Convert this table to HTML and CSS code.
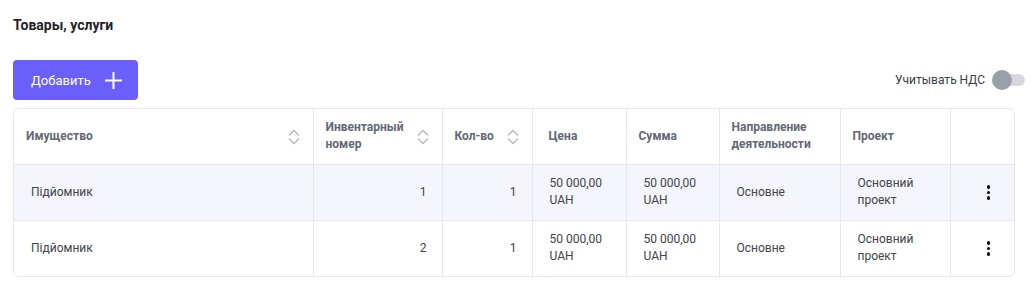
FILE: index.html
```html
<!DOCTYPE html>
<html lang="ru">
<head>
<meta charset="utf-8">
<title>Товары, услуги</title>
<link rel="stylesheet" href="styles.css">
</head>
<body>
<div class="page">
  <h2 class="title">Товары, услуги</h2>
  <div class="toolbar">
    <button class="btn-add">Добавить
      <svg class="plus" width="17" height="17" viewBox="0 0 17 17"><path d="M8.5 0V17M0 8.5H17" stroke="#fff" stroke-width="2"/></svg>
    </button>
    <div class="vat">
      <span class="vat-label">Учитывать НДС</span>
      <span class="switch"><span class="track"></span><span class="knob"></span></span>
    </div>
  </div>
  <div class="table-wrap">
    <table class="grid">
      <colgroup>
        <col style="width:299px"><col style="width:129px"><col style="width:90px"><col style="width:94px"><col style="width:93px"><col style="width:121px"><col style="width:110px"><col>
      </colgroup>
      <thead>
        <tr>
          <th><div class="th-sort"><span>Имущество</span><svg class="sort" width="14" height="18" viewBox="0 0 14 18"><path d="M2 7.5L7 2.5L12 7.5M2 10.5L7 15.5L12 10.5" fill="none" stroke="#b4b7bf" stroke-width="1.3"/></svg></div></th>
          <th><div class="th-sort"><span>Инвентарный номер</span><svg class="sort" width="14" height="18" viewBox="0 0 14 18"><path d="M2 7.5L7 2.5L12 7.5M2 10.5L7 15.5L12 10.5" fill="none" stroke="#b4b7bf" stroke-width="1.3"/></svg></div></th>
          <th><div class="th-sort"><span>Кол-во</span><svg class="sort" width="14" height="18" viewBox="0 0 14 18"><path d="M2 7.5L7 2.5L12 7.5M2 10.5L7 15.5L12 10.5" fill="none" stroke="#b4b7bf" stroke-width="1.3"/></svg></div></th>
          <th class="th-price">Цена</th>
          <th>Сумма</th>
          <th>Направление деятельности</th>
          <th>Проект</th>
          <th></th>
        </tr>
      </thead>
      <tbody>
        <tr class="alt">
          <td>Підйомник</td>
          <td class="num">1</td>
          <td class="num">1</td>
          <td>50 000,00<br>UAH</td>
          <td>50 000,00<br>UAH</td>
          <td>Основне</td>
          <td>Основний<br>проект</td>
          <td class="menu"><span class="dots"><i></i><i></i><i></i></span></td>
        </tr>
        <tr>
          <td>Підйомник</td>
          <td class="num">2</td>
          <td class="num">1</td>
          <td>50 000,00<br>UAH</td>
          <td>50 000,00<br>UAH</td>
          <td>Основне</td>
          <td>Основний<br>проект</td>
          <td class="menu"><span class="dots"><i></i><i></i><i></i></span></td>
        </tr>
      </tbody>
    </table>
  </div>
</div>
</body>
</html>
```

FILE: styles.css
```css
* { box-sizing: border-box; }
html, body { margin: 0; padding: 0; background: #fff; }
body { font-family: Roboto, "Noto Sans", "DejaVu Sans", sans-serif; color: #3a3d45; }
.page { padding: 0 20px 0 13px; }
.title {
  margin: 0;
  padding-top: 17px;
  height: 60px;
  font-size: 14px;
  font-weight: 700;
  line-height: 17px;
  color: #1f232b;
}
.toolbar {
  display: flex;
  align-items: center;
  justify-content: space-between;
  height: 40px;
  margin-right: -10px;
  margin-bottom: 8px;
}
.btn-add {
  display: flex;
  align-items: center;
  gap: 14px;
  height: 40px;
  width: 125px;
  padding: 0 0 0 18px;
  border: none;
  border-radius: 4px;
  background: #6a5ff9;
  color: #fff;
  font-family: inherit;
  font-size: 13px;
  font-weight: 400;
}
.plus { display: block; }
.vat { display: flex; align-items: center; gap: 7px; }
.vat-label { font-size: 12px; color: #3a3d45; }
.switch { position: relative; display: block; width: 33px; height: 20px; }
.track {
  position: absolute; left: 3px; top: 4px;
  width: 30px; height: 12px; border-radius: 6px;
  background: #d6d8dd;
}
.knob {
  position: absolute; left: 0; top: 0;
  width: 20px; height: 20px; border-radius: 50%;
  background: #9aa0a9;
}
.table-wrap {
  border: 1px solid #e6e7eb;
  border-radius: 6px;
  overflow: hidden;
}
.grid {
  width: 100%;
  table-layout: fixed;
  border-collapse: collapse;
  font-size: 12px;
  line-height: 17px;
}
.grid th, .grid td {
  border-right: 1px solid #e6e7eb;
  border-bottom: 1px solid #e6e7eb;
  vertical-align: middle;
  text-align: left;
}
.grid th:last-child, .grid td:last-child { border-right: none; }
.grid tbody tr:last-child td { border-bottom: none; }
.grid thead tr { height: 55px; }
.grid tbody tr { height: 56px; }
.grid th {
  padding: 0 12px;
  font-weight: 700;
  color: #636875;
}
.grid th.th-price { padding-left: 16px; }
.th-sort { display: flex; align-items: center; justify-content: space-between; gap: 4px; }
.sort { flex: none; display: block; margin-top: 1px; }
.grid td { padding: 0 17px; color: #41444c; }
.grid td:first-child { padding-left: 17px; }
.grid td.num { text-align: right; padding-right: 15px; }
.grid tr.alt td { background: #f5f6fd; }
.grid td.menu { text-align: center; padding: 0 0 0 12px; }
.dots { display: inline-flex; flex-direction: column; gap: 2px; vertical-align: middle; }
.dots i { display: block; width: 3.5px; height: 3.5px; border-radius: 50%; background: #111; }
```
